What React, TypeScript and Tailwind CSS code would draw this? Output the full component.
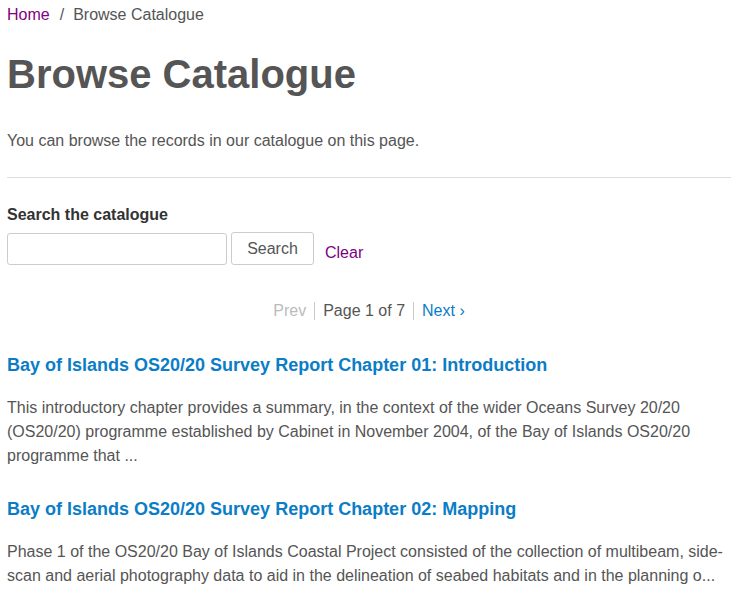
import React from "react";

type Record = {
  title: string;
  summary: string;
};

const records: Record[] = [
  {
    title: "Bay of Islands OS20/20 Survey Report Chapter 01: Introduction",
    summary:
      "This introductory chapter provides a summary, in the context of the wider Oceans Survey 20/20 (OS20/20) programme established by Cabinet in November 2004, of the Bay of Islands OS20/20 programme that ...",
  },
  {
    title: "Bay of Islands OS20/20 Survey Report Chapter 02: Mapping",
    summary:
      "Phase 1 of the OS20/20 Bay of Islands Coastal Project consisted of the collection of multibeam, side-scan and aerial photography data to aid in the delineation of seabed habitats and in the planning o...",
  },
];

export default function App() {
  return (
    <div className="min-h-screen bg-white px-[7px] text-[16px] leading-[22px] text-[#555] font-['Liberation_Sans',Arial,sans-serif]">
      {/* breadcrumb */}
      <nav className="pt-[4px] flex items-center">
        <a href="#" className="text-[#800080]">Home</a>
        <span className="pl-[10px] pr-[9px]">/</span>
        <span>Browse Catalogue</span>
      </nav>

      <h1 className="mt-[24px] text-[40px] leading-[48px] font-bold text-[#555]">Browse Catalogue</h1>

      <p className="mt-[32px]">You can browse the records in our catalogue on this page.</p>

      <hr className="mt-[25px] border-t border-[#ddd]" />

      {/* search */}
      <div className="mt-[26px]">
        <label className="block font-bold text-[#333]">Search the catalogue</label>
        <div className="mt-[6px] flex items-center">
          <input
            type="text"
            className="w-[220px] h-[32px] border border-[#ccc] rounded-[3px] px-2 outline-none"
          />
          <button className="ml-[4px] h-[33px] w-[83px] border border-[#ccc] rounded-[3px] bg-white text-[#555]">
            Search
          </button>
          <a href="#" className="ml-[11px] mt-[8px] text-[#800080]">Clear</a>
        </div>
      </div>

      {/* pagination */}
      <div className="mt-[37px] flex justify-center items-center">
        <span className="text-[#bbb] pr-[8px] border-r border-[#ccc] leading-[18px]">Prev</span>
        <span className="px-[8px] border-r border-[#ccc] leading-[18px]">Page 1 of 7</span>
        <a href="#" className="pl-[8px] text-[#0b7dc6] leading-[18px]">Next ›</a>
      </div>

      {/* results */}
      <div className="mt-[33px]">
        {records.map((r) => (
          <div key={r.title} className="mb-[29px]">
            <a href="#" className="block text-[18px] leading-[24px] font-bold text-[#0b7dc6]">
              {r.title}
            </a>
            <p className="mt-[19px] leading-[24px]">{r.summary}</p>
          </div>
        ))}
      </div>
    </div>
  );
}
